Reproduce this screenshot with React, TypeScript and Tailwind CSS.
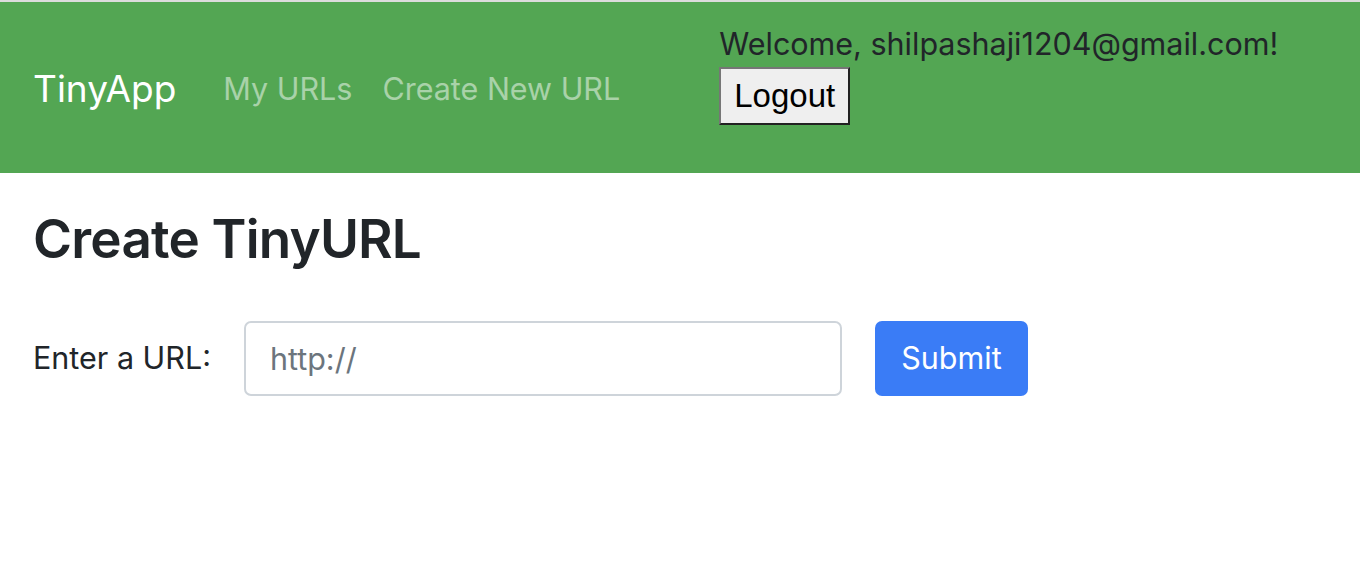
import React from 'react';

export default function App() {
  return (
    <div className="min-h-[566px] bg-white text-[#212529] font-['Inter',sans-serif] text-[30.5px]">
      {/* Navbar */}
      <nav className="flex items-start h-[173px] border-t-2 border-[#dcdcdc] bg-[#53a653] pl-[33px]">
        <div className="flex items-center h-full pt-[3px]">
          <a className="text-[37px] text-white mr-[32px]">TinyApp</a>
          <a className="px-[15px] text-white/50">My URLs</a>
          <a className="px-[15px] text-white/50">Create New URL</a>
        </div>
        <div className="ml-[84px] pt-[22px] flex flex-col items-start">
          <span className="text-[#212529] leading-[40px]">Welcome, shilpashaji1204@gmail.com!</span>
          <button className="mt-[3px] h-[58px] px-[13px] bg-[#efefef] border-2 border-t-[#767676] border-l-[#767676] border-b-[#222] border-r-[#222] text-black font-['Liberation_Sans',sans-serif] text-[33px]">
            Logout
          </button>
        </div>
      </nav>

      {/* Main */}
      <main className="px-[33px]">
        <h2 className="text-[53px] font-semibold tracking-[-0.8px] leading-[1.2] mt-[35px] mb-[49px]">Create TinyURL</h2>
        <form className="flex items-center" onSubmit={(e) => e.preventDefault()}>
          <label className="mr-[33px]">Enter a URL:</label>
          <input
            type="text"
            placeholder="http://"
            className="w-[598px] h-[75px] px-[24px] border-2 border-[#ced4da] rounded-[7px] placeholder-[#6c757d] outline-none"
          />
          <button className="ml-[33px] w-[153px] h-[75px] rounded-[7px] bg-[#3a7cf6] text-white">Submit</button>
        </form>
      </main>
    </div>
  );
}
